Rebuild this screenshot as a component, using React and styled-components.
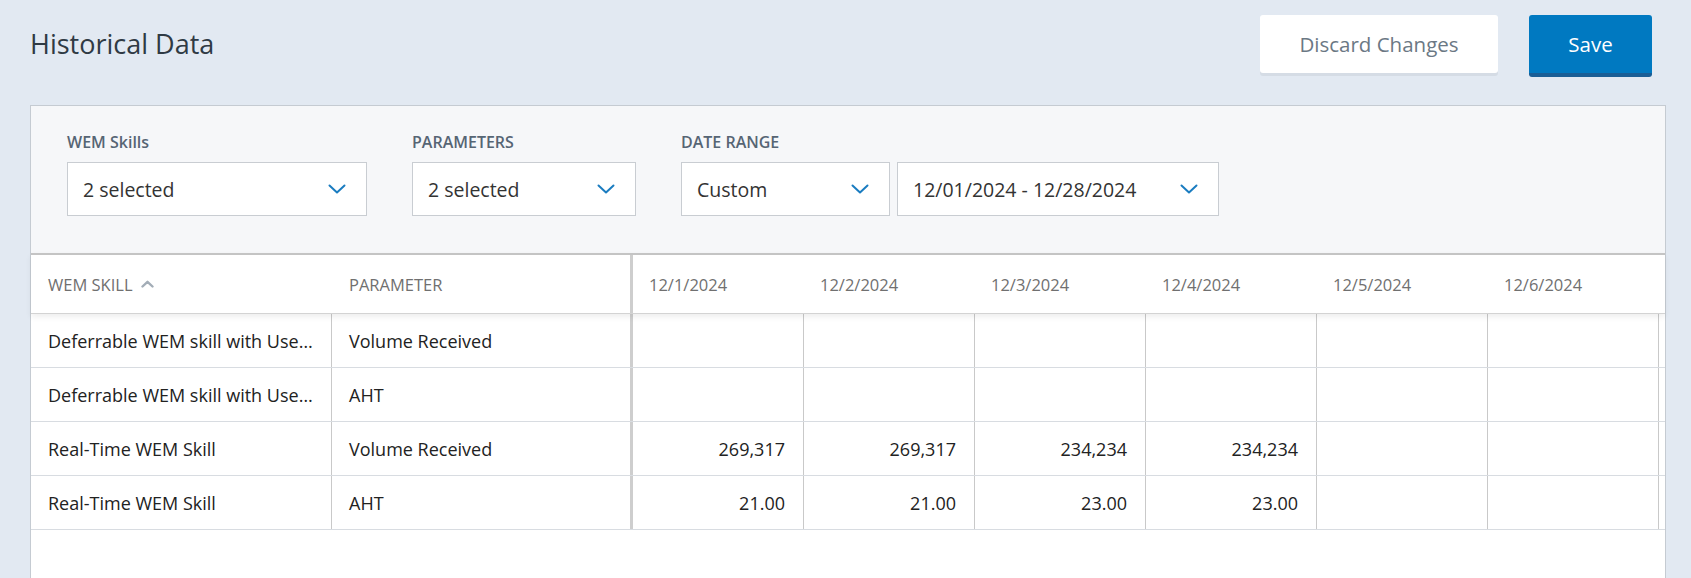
import React from 'react'
import styled, { createGlobalStyle } from 'styled-components'

const GlobalStyle = createGlobalStyle`
  html, body {
    margin: 0;
    padding: 0;
    background: #e2e9f2;
    font-family: "Open Sans", "Liberation Sans", sans-serif;
    color: #2b2b2b;
  }
  * { box-sizing: border-box; }
`

const skills = [
  { skill: 'Deferrable WEM skill with User Defined Settings', param: 'Volume Received', values: [] },
  { skill: 'Deferrable WEM skill with User Defined Settings', param: 'AHT', values: [] },
  { skill: 'Real-Time WEM Skill', param: 'Volume Received', values: ['269,317', '269,317', '234,234', '234,234'] },
  { skill: 'Real-Time WEM Skill', param: 'AHT', values: ['21.00', '21.00', '23.00', '23.00'] },
]

const dates = ['12/1/2024', '12/2/2024', '12/3/2024', '12/4/2024', '12/5/2024', '12/6/2024', '12/7/2024', '12/8/2024']

function Chevron() {
  return (
    <svg width="18" height="10" viewBox="0 0 18 10" fill="none">
      <polyline points="1.5,1.5 9,8.5 16.5,1.5" stroke="#1a7cc0" strokeWidth="2" strokeLinecap="round" strokeLinejoin="round" />
    </svg>
  )
}

function SortUp() {
  return (
    <svg width="13" height="8" viewBox="0 0 13 8" fill="none">
      <polyline points="1.5,6.5 6.5,1.8 11.5,6.5" stroke="#a3adb7" strokeWidth="2.4" strokeLinecap="round" strokeLinejoin="round" />
    </svg>
  )
}

function Select({ value, width }) {
  return (
    <SelectBox $width={width}>
      <span>{value}</span>
      <Chevron />
    </SelectBox>
  )
}

export default function App() {
  return (
    <Page>
      <GlobalStyle />
      <TopBar>
        <Title>Historical Data</Title>
        <Actions>
          <GhostButton>Discard Changes</GhostButton>
          <PrimaryButton>Save</PrimaryButton>
        </Actions>
      </TopBar>

      <Panel>
        <Filters>
          <Field>
            <Label>WEM Skills</Label>
            <Select value="2 selected" width={300} />
          </Field>
          <Field>
            <Label>PARAMETERS</Label>
            <Select value="2 selected" width={224} />
          </Field>
          <Field>
            <Label>DATE RANGE</Label>
            <SelectPair>
              <Select value="Custom" width={209} />
              <Select value="12/01/2024 - 12/28/2024" width={322} />
            </SelectPair>
          </Field>
        </Filters>

        <Table>
          <HeaderRow>
            <SkillCell $head>
              WEM SKILL <SortUp />
            </SkillCell>
            <ParamCell $head>PARAMETER</ParamCell>
            {dates.map(d => (
              <DateCell key={d} $head>{d}</DateCell>
            ))}
          </HeaderRow>
          {skills.map((row, i) => (
            <Row key={i}>
              <SkillCell>
                <Ellipsis>{row.skill}</Ellipsis>
              </SkillCell>
              <ParamCell>{row.param}</ParamCell>
              {dates.map((d, j) => (
                <DateCell key={d}>{row.values[j] || ''}</DateCell>
              ))}
            </Row>
          ))}
        </Table>
      </Panel>
    </Page>
  )
}

const Page = styled.div`
  height: 100vh;
  overflow: hidden;
  display: flex;
  flex-direction: column;
  padding: 15px 25px 0 30px;
`

const TopBar = styled.div`
  display: flex;
  align-items: flex-start;
  justify-content: space-between;
  padding-right: 14px;
  height: 90px;
`

const Title = styled.h1`
  margin: 12px 0 0 0;
  font-size: 27px;
  font-weight: 400;
  color: #2f3a44;
  line-height: 34px;
`

const Actions = styled.div`
  display: flex;
  gap: 31px;
`

const GhostButton = styled.button`
  width: 238px;
  height: 58px;
  border: none;
  border-radius: 3px;
  background: #fff;
  box-shadow: 0 3px 0 #d5dce5;
  font-family: inherit;
  font-size: 20.5px;
  color: #6b7884;
`

const PrimaryButton = styled.button`
  width: 123px;
  height: 62px;
  border: none;
  border-bottom: 4px solid #1a5e96;
  border-radius: 3px;
  background: #0079c1;
  font-family: inherit;
  font-size: 20.5px;
  color: #fff;
`

const Panel = styled.div`
  flex: 1;
  display: flex;
  flex-direction: column;
  background: #fff;
  border: 1px solid #c5cbd2;
  margin-bottom: -2px;
`

const Filters = styled.div`
  display: flex;
  gap: 45px;
  background: #f6f7f9;
  padding: 25px 36px 37px;
`

const Field = styled.div`
  display: flex;
  flex-direction: column;
  gap: 9px;
`

const Label = styled.div`
  font-size: 16px;
  font-weight: 600;
  color: #566574;
  line-height: 22px;
`

const SelectPair = styled.div`
  display: flex;
  gap: 7px;
`

const SelectBox = styled.div`
  width: ${p => p.$width}px;
  height: 54px;
  display: flex;
  align-items: center;
  justify-content: space-between;
  padding: 0 20px 0 15px;
  background: #fff;
  border: 1px solid #c9cdd2;
  font-size: 19.5px;
  color: #333;
`

const Table = styled.div`
  display: flex;
  flex-direction: column;
`

const Row = styled.div`
  display: flex;
  height: 54px;
  overflow: hidden;
  border-bottom: 1px solid #d8dce1;
`

const HeaderRow = styled(Row)`
  height: 61px;
  border-top: 2px solid #c4c4c4;
  border-bottom: 1px solid #d3d3d3;
  box-shadow: 0 3px 6px rgba(0, 0, 0, 0.07);
  position: relative;
  z-index: 1;
`

const Cell = styled.div`
  flex-shrink: 0;
  display: flex;
  align-items: center;
  gap: 8px;
  font-size: ${p => (p.$head ? '16.5px' : '18px')};
  color: ${p => (p.$head ? '#707070' : '#222')};
  white-space: nowrap;
  overflow: hidden;
`

const SkillCell = styled(Cell)`
  width: 301px;
  padding: 0 17px;
  border-right: 1px solid ${p => (p.$head ? 'transparent' : '#c9c9c9')};
`

const ParamCell = styled(Cell)`
  width: 301px;
  padding: 0 17px;
  border-right: 3px solid #cecece;
`

const DateCell = styled(Cell)`
  width: 171px;
  padding: 0 18px 0 16px;
  justify-content: ${p => (p.$head ? 'flex-start' : 'flex-end')};
  border-right: 1px solid ${p => (p.$head ? 'transparent' : '#c9c9c9')};
`

const Ellipsis = styled.span`
  overflow: hidden;
  text-overflow: ellipsis;
`
